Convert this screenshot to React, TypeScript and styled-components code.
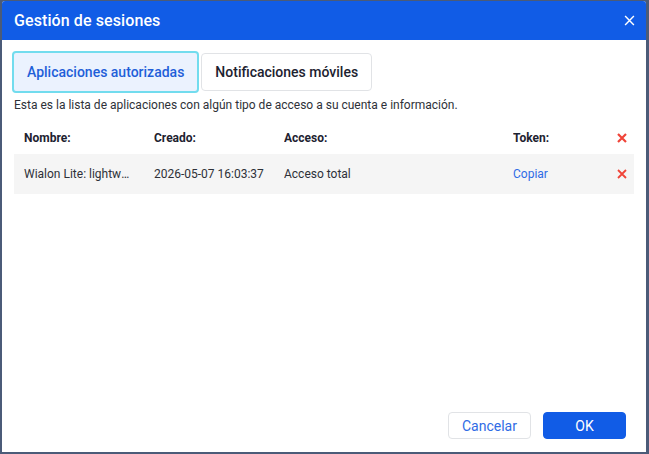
import styled, { createGlobalStyle } from 'styled-components';

const GlobalStyle = createGlobalStyle`
    html, body {
        margin: 0;
        padding: 0;
        background: #4b5b78;
        font-family: Roboto, "Liberation Sans", Arial, sans-serif;
    }
    * { box-sizing: border-box; }
`

const Dialog = styled.div`
    margin: 1px 3px 0 2px;
    width: 644px;
    height: 451px;
    background: #ffffff;
    border-radius: 3px 3px 0 0;
    display: flex;
    flex-direction: column;
    overflow: hidden;
`

const Header = styled.div`
    height: 39px;
    background: #115ce6;
    color: #ffffff;
    display: flex;
    align-items: center;
    justify-content: space-between;
    padding: 0 9px 0 12px;
    h2 {
        margin: 0;
        font-size: 16px;
        font-weight: 500;
        letter-spacing: 0.1px;
    }
`

const CloseButton = styled.button`
    background: none;
    border: none;
    padding: 0;
    width: 16px;
    height: 16px;
    display: flex;
    align-items: center;
    justify-content: center;
    cursor: pointer;
`

const Body = styled.div`
    flex: 1;
    padding: 11px 10px 0 10px;
`

const Tabs = styled.div`
    display: flex;
    align-items: center;
    gap: 2px;
`

const Tab = styled.button<{ $active?: boolean }>`
    font-family: inherit;
    font-size: 14px;
    font-weight: 500;
    border-radius: 4px;
    cursor: pointer;
    padding: 0 13px;
    height: ${p => p.$active ? '42px' : '38px'};
    background: ${p => p.$active ? '#ebf2fe' : '#ffffff'};
    color: ${p => p.$active ? '#1f5fd9' : '#1d2230'};
    border: ${p => p.$active ? '2px solid #72dcee' : '1px solid #e1e3e6'};
`

const Description = styled.p`
    margin: 5px 0 0 2px;
    font-size: 12px;
    color: #2e3138;
`

const Row = styled.div<{ $head?: boolean }>`
    display: grid;
    grid-template-columns: 130px 130px 229px 1fr 10px;
    align-items: center;
    margin: 0 2px;
    padding: 0 7px 0 10px;
    font-size: 12px;
    height: ${p => p.$head ? '32px' : '40px'};
    margin-top: ${p => p.$head ? '10px' : '0'};
    background: ${p => p.$head ? 'transparent' : '#f5f5f5'};
    color: ${p => p.$head ? '#1d2230' : '#2e3138'};
    font-weight: ${p => p.$head ? 700 : 400};
`

const Cell = styled.span`
    white-space: nowrap;
    overflow: hidden;
    text-overflow: ellipsis;
    padding-right: 10px;
`

const CopyLink = styled.a`
    color: #2f6ce5;
    cursor: pointer;
`

const Remove = styled.button`
    background: none;
    border: none;
    padding: 0;
    width: 10px;
    height: 10px;
    display: flex;
    cursor: pointer;
`

const Footer = styled.div`
    display: flex;
    justify-content: flex-end;
    gap: 12px;
    padding: 0 20px 13px 0;
`

const Button = styled.button<{ $primary?: boolean }>`
    width: 83px;
    height: 27px;
    border-radius: 4px;
    font-family: inherit;
    font-size: 14px;
    cursor: pointer;
    background: ${p => p.$primary ? '#115ce6' : '#ffffff'};
    color: ${p => p.$primary ? '#ffffff' : '#2f6ce5'};
    border: ${p => p.$primary ? '1px solid #115ce6' : '1px solid #e1e3e6'};
`

function Cross({ color, size, width }: { color: string, size: number, width: number }) {
    return (
        <svg width={size} height={size} viewBox="0 0 10 10">
            <path d="M1 1L9 9M9 1L1 9" stroke={color} strokeWidth={width} strokeLinecap="butt" />
        </svg>
    )
}

const apps = [
    { name: 'Wialon Lite: lightweight', created: '2026-05-07 16:03:37', access: 'Acceso total' },
]

export default function App() {
    return <>
        <GlobalStyle />
        <Dialog>
            <Header>
                <h2>Gestión de sesiones</h2>
                <CloseButton>
                    <Cross color="#ffffff" size={11} width={1.3} />
                </CloseButton>
            </Header>
            <Body>
                <Tabs>
                    <Tab $active>Aplicaciones autorizadas</Tab>
                    <Tab>Notificaciones móviles</Tab>
                </Tabs>
                <Description>
                    Esta es la lista de aplicaciones con algún tipo de acceso a su cuenta e información.
                </Description>
                <Row $head>
                    <Cell>Nombre:</Cell>
                    <Cell>Creado:</Cell>
                    <Cell>Acceso:</Cell>
                    <Cell>Token:</Cell>
                    <Remove><Cross color="#f04438" size={10} width={2.2} /></Remove>
                </Row>
                {apps.map(a => (
                    <Row key={a.created}>
                        <Cell style={{ maxWidth: 118 }}>{a.name}</Cell>
                        <Cell>{a.created}</Cell>
                        <Cell>{a.access}</Cell>
                        <Cell><CopyLink>Copiar</CopyLink></Cell>
                        <Remove><Cross color="#f04438" size={10} width={1.8} /></Remove>
                    </Row>
                ))}
            </Body>
            <Footer>
                <Button>Cancelar</Button>
                <Button $primary>OK</Button>
            </Footer>
        </Dialog>
    </>
}
